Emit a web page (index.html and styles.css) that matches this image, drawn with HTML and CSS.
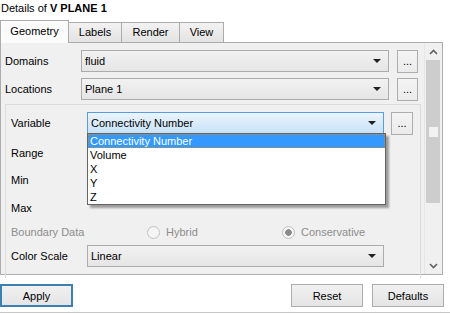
FILE: index.html
```html
<!DOCTYPE html>
<html>
<head>
  <meta charset="UTF-8">
  <title>Details of V PLANE 1</title>
  <link rel="stylesheet" href="styles.css">
</head>
<body>
  <div class="title">Details of <b>V PLANE 1</b></div>

  <div class="tabs">
    <div class="tab tab-active tab-geometry">Geometry</div>
    <div class="tab tab-labels">Labels</div>
    <div class="tab tab-render">Render</div>
    <div class="tab tab-view">View</div>
  </div>

  <div class="panel">
    <div class="form">
      <div class="row">
        <span class="label">Domains</span>
        <div class="combo combo-wide">fluid<span class="arrow"></span></div>
        <button class="dots">...</button>
      </div>
      <div class="row row-second">
        <span class="label">Locations</span>
        <div class="combo combo-wide">Plane 1<span class="arrow"></span></div>
        <button class="dots">...</button>
      </div>

      <div class="group">
        <div class="row">
          <span class="label label-inner">Variable</span>
          <div class="combo combo-focus">Connectivity Number<span class="arrow"></span>
            <ul class="list">
              <li class="list-item list-item-selected">Connectivity Number</li>
              <li class="list-item">Volume</li>
              <li class="list-item">X</li>
              <li class="list-item">Y</li>
              <li class="list-item">Z</li>
            </ul>
          </div>
          <button class="dots dots-inner">...</button>
        </div>
        <div class="row row-range">
          <span class="label label-inner">Range</span>
        </div>
        <div class="row row-min">
          <span class="label label-inner">Min</span>
        </div>
        <div class="row row-max">
          <span class="label label-inner">Max</span>
          <span class="value">0.000e+00</span>
        </div>
        <div class="row row-boundary">
          <span class="label label-inner label-disabled">Boundary Data</span>
          <span class="radio radio-hybrid"><span class="circle"></span>Hybrid</span>
          <span class="radio"><span class="circle circle-on"></span>Conservative</span>
        </div>
        <div class="row row-scale">
          <span class="label label-inner">Color Scale</span>
          <div class="combo">Linear<span class="arrow"></span></div>
        </div>
      </div>
    </div>

    <div class="scrollbar">
      <div class="scroll-btn">
        <svg width="9" height="6" viewBox="0 0 9 6"><path d="M1 5 L4.5 1.5 L8 5" fill="none" stroke="#606060" stroke-width="1.6"/></svg>
      </div>
      <div class="thumb"><span class="grip"></span></div>
      <div class="track"></div>
      <div class="scroll-btn">
        <svg width="9" height="6" viewBox="0 0 9 6"><path d="M1 1 L4.5 4.5 L8 1" fill="none" stroke="#606060" stroke-width="1.6"/></svg>
      </div>
    </div>
  </div>

  <div class="actions">
    <button class="btn btn-default">Apply</button>
    <span class="spacer"></span>
    <button class="btn">Reset</button>
    <button class="btn">Defaults</button>
  </div>
  <div class="bottom-line"></div>
</body>
</html>
```

FILE: styles.css
```css
body {
  margin: 0;
  width: 450px;
  height: 314px;
  overflow: hidden;
  background-color: #ffffff;
  font-family: "Liberation Sans", Arial, sans-serif;
  font-size: 11px;
  color: #000;
}
.title {
  height: 19px;
  line-height: 17px;
  padding-left: 1px;
}
.tabs {
  display: flex;
  align-items: flex-end;
  height: 23px;
  padding-left: 1px;
}
.tab {
  height: 19px;
  line-height: 19px;
  text-align: center;
  border: 1px solid #acacac;
  border-bottom: none;
  margin-left: -1px;
  background: linear-gradient(#f2f2f2, #e3e3e3);
}
.tab-active {
  height: 22px;
  line-height: 21px;
  background: #fbfbfb;
  position: relative;
  z-index: 1;
  margin-bottom: -1px;
}
.tab-geometry { width: 67px; }
.tab-labels { width: 52px; }
.tab-render { width: 57px; }
.tab-view { width: 43px; }
.panel {
  display: flex;
  width: 441px;
  height: 231px;
  border: 1px solid #acacac;
  background-color: #f0f0f0;
}
.form {
  flex: 1;
  padding-top: 7px;
}
.row {
  display: flex;
  align-items: center;
  height: 22px;
  white-space: nowrap;
}
.row-second { margin-top: 6px; }
.label {
  width: 76px;
  padding-left: 4px;
}
.label-inner {
  width: 76px;
  padding-left: 5px;
}
.label-disabled { color: #8d8d8d; }
.combo {
  position: relative;
  box-sizing: border-box;
  width: 297px;
  height: 22px;
  line-height: 20px;
  padding-left: 3px;
  border: 1px solid #acacac;
  background: linear-gradient(#f2f2f2, #e5e5e5);
}
.combo-wide {
  width: 308px;
  margin-right: 8px;
}
.combo-focus {
  border-color: #569de5;
  background: linear-gradient(#ebf4fc, #c9e2f8);
  margin-right: 7px;
}
.arrow {
  position: absolute;
  right: 7px;
  top: 8px;
  border-left: 4px solid transparent;
  border-right: 4px solid transparent;
  border-top: 4px solid #202020;
}
.dots {
  box-sizing: border-box;
  width: 21px;
  height: 23px;
  padding: 0;
  border: 1px solid #adadad;
  background: linear-gradient(#f4f4f4, #ebebeb);
  font-family: "Liberation Sans", Arial, sans-serif;
  font-size: 11px;
  line-height: 20px;
}
.dots-inner { width: 22px; }
.group {
  width: 414px;
  height: 166px;
  margin-top: 4px;
  margin-left: 4px;
  padding-top: 7px;
  border: 1px solid #dcdcdc;
  border-bottom: none;
}
.row-range { margin-top: 8px; }
.row-min { margin-top: 5px; }
.row-max { margin-top: 6px; }
.row-boundary { margin-top: 2px; }
.row-scale { margin-top: 2px; }
.value {
  align-self: flex-start;
  width: 294px;
  margin-top: -5px;
  text-align: right;
  color: #555;
}
.radio {
  display: flex;
  align-items: center;
  color: #8d8d8d;
}
.radio-hybrid {
  width: 135px;
  margin-left: 60px;
}
.circle {
  box-sizing: border-box;
  width: 13px;
  height: 13px;
  margin-right: 6px;
  border: 1px solid #c2c2c2;
  border-radius: 50%;
  background: #f4f4f4;
}
.circle-on {
  background: radial-gradient(circle, #8a8a8a 0, #8a8a8a 3px, #f4f4f4 3.5px);
}
.list {
  position: absolute;
  z-index: 2;
  left: -1px;
  top: 20px;
  width: 297px;
  margin: 0;
  padding: 0;
  list-style: none;
  background: #ffffff;
  border: 1px solid #646464;
  box-shadow: 3px 3px 2px rgba(0, 0, 0, 0.35);
}
.list-item {
  height: 14px;
  line-height: 14px;
  padding-left: 2px;
}
.list-item-selected {
  background: #3399ff;
  color: #ffffff;
  outline: 1px dotted #c88a3a;
  outline-offset: -1px;
}
.scrollbar {
  display: flex;
  flex-direction: column;
  width: 16px;
  margin-right: 1px;
  background: #f0f0f0;
  border-left: 1px solid #e6e6e6;
}
.scroll-btn {
  height: 17px;
  display: flex;
  align-items: center;
  justify-content: center;
}
.thumb {
  height: 143px;
  margin: 0 1px;
  background: #cdcdcd;
  display: flex;
  align-items: center;
  justify-content: center;
}
.grip {
  width: 9px;
  height: 10px;
  background: #f2f2f2;
}
.track { flex: 1; }
.actions {
  display: flex;
  padding-top: 9px;
  height: 23px;
}
.spacer { flex: 1; }
.btn {
  box-sizing: border-box;
  height: 23px;
  width: 72px;
  margin-right: 9px;
  padding: 0;
  border: 1px solid #acacac;
  background: linear-gradient(#f0f0f0, #e5e5e5);
  font-family: "Liberation Sans", Arial, sans-serif;
  font-size: 11px;
}
.btn:last-child { margin-right: 6px; }
.btn-default {
  width: 73px;
  border-color: #3c7fb1;
  border-width: 2px;
}
.bottom-line {
  margin-top: 5px;
  height: 1px;
  background: #c8c8c8;
}
```
